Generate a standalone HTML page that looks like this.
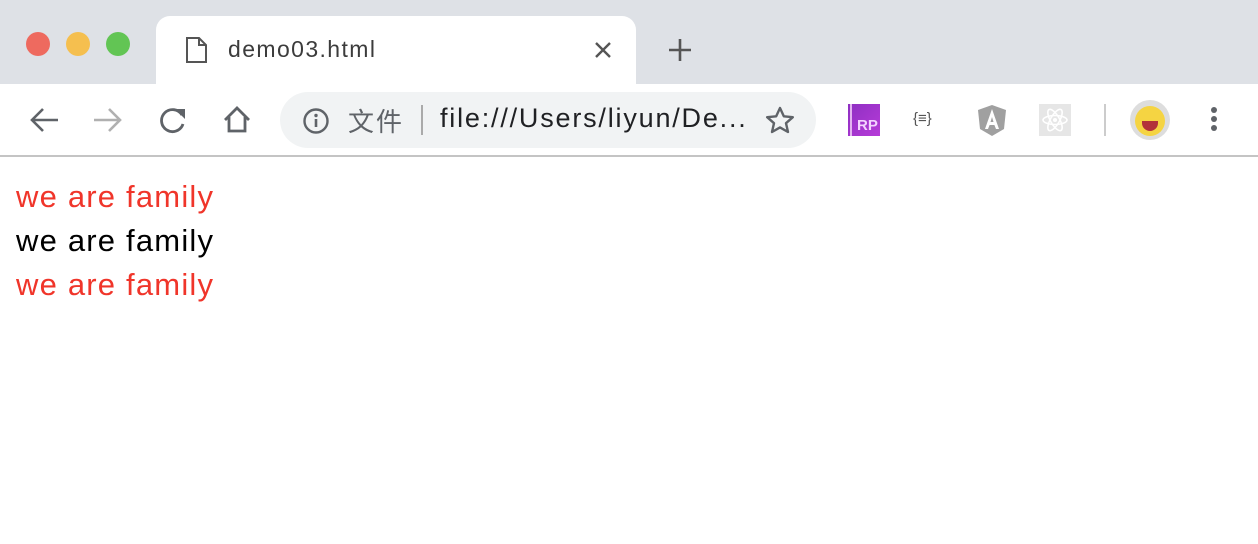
<!DOCTYPE html>
<html><head><meta charset="utf-8"><style>
*{margin:0;padding:0;box-sizing:border-box}
body{width:1258px;height:544px;overflow:hidden;background:#fff;font-family:"Liberation Sans","Noto Sans CJK SC",sans-serif;position:relative}
.top{position:absolute;left:0;top:0;width:1258px;height:84px;background:#dee1e6}
.dot{position:absolute;top:32px;width:24px;height:24px;border-radius:50%}
.tab{position:absolute;left:156px;top:16px;width:480px;height:68px;background:#fff;border-radius:14px 14px 0 0}
.bar{position:absolute;left:0;top:84px;width:1258px;height:73px;background:#fff;border-bottom:2px solid #c4c4c4}
.omni{position:absolute;left:280px;top:92px;width:536px;height:56px;background:#f1f3f4;border-radius:28px}
.t{position:absolute;white-space:nowrap}
.c{position:absolute;left:16px;font-size:31px;line-height:44px;letter-spacing:1.2px}
</style></head><body>
<div class="top"></div>
<div class="dot" style="left:26px;background:#ee6a5f"></div>
<div class="dot" style="left:66px;background:#f5bf4f"></div>
<div class="dot" style="left:106px;background:#62c554"></div>
<div class="tab"></div>
<svg style="position:absolute;left:185px;top:36px" width="24" height="28"><path d="M2 2h12l7 7v17H2z M14 2v7h7" fill="none" stroke="#555" stroke-width="2"/></svg>
<div class="t" style="left:228px;top:36px;font-size:23px;letter-spacing:1.4px;color:#3c3c3c">demo03.html</div>
<svg style="position:absolute;left:594px;top:41px" width="18" height="18"><path d="M2 2l14 14M16 2L2 16" stroke="#555" stroke-width="2.4"/></svg>
<svg style="position:absolute;left:667px;top:37px" width="26" height="26"><path d="M13 2v22M2 13h22" stroke="#555" stroke-width="2.6"/></svg>
<div class="bar"></div>
<svg style="position:absolute;left:28px;top:106px" width="32" height="28"><path d="M30 14H4M15 3L4 14l11 11" fill="none" stroke="#5f6368" stroke-width="2.6"/></svg>
<svg style="position:absolute;left:92px;top:106px" width="32" height="28"><path d="M2 14h26M17 3l11 11-11 11" fill="none" stroke="#b0b0b0" stroke-width="2.6"/></svg>
<svg style="position:absolute;left:158px;top:106px" width="30" height="28"><path d="M24 9A11 11 0 1 0 25 18" fill="none" stroke="#5f6368" stroke-width="2.8"/><path d="M17 3h10v10z" fill="#5f6368"/></svg>
<svg style="position:absolute;left:222px;top:105px" width="30" height="30"><path d="M3 15L15 3l12 12M7 12v14h16V12" fill="none" stroke="#5f6368" stroke-width="2.8"/></svg>
<div class="omni"></div>
<svg style="position:absolute;left:302px;top:107px" width="28" height="28"><circle cx="14" cy="14" r="11.5" fill="none" stroke="#5f6368" stroke-width="2.4"/><path d="M14 12v8" stroke="#5f6368" stroke-width="2.6"/><circle cx="14" cy="8.5" r="1.7" fill="#5f6368"/></svg>
<div class="t" style="left:348px;top:102px;font-size:26px;letter-spacing:2px;color:#5f6368">文件</div>
<div style="position:absolute;left:421px;top:105px;width:2px;height:30px;background:#aaa"></div>
<div class="t" style="left:440px;top:103px;font-size:27px;letter-spacing:1.8px;color:#202124">file:///Users/liyun/De...</div>
<svg style="position:absolute;left:764px;top:105px" width="32" height="30"><path d="M16 3l3.8 8.3 9 .9-6.8 6 2 8.8L16 22.4 8 27l2-8.8-6.8-6 9-.9z" fill="none" stroke="#5f6368" stroke-width="2.4" stroke-linejoin="round"/></svg>
<div style="position:absolute;left:848px;top:104px;width:32px;height:32px;background:linear-gradient(135deg,#8e2fc2,#b63bd8);"></div>
<div style="position:absolute;left:850px;top:104px;width:2px;height:32px;background:#e3b3f0"></div>
<div class="t" style="left:857px;top:117px;font-size:15px;font-weight:bold;color:#f3d4ff">RP</div>
<div class="t" style="left:913px;top:110px;font-size:15px;color:#555">{≡}</div>
<svg style="position:absolute;left:976px;top:103px" width="32" height="34"><path d="M16 2L30 7l-2 19-12 7-12-7L2 7z" fill="#a0a0a0"/><path d="M16 6l-7 20h3l1.6-4h4.8L20 26h3z M14.5 19L16 14l1.5 5z" fill="#fff"/></svg>
<div style="position:absolute;left:1039px;top:104px;width:32px;height:32px;background:#e6e6e6"></div>
<svg style="position:absolute;left:1039px;top:104px" width="32" height="32"><g fill="none" stroke="#fff" stroke-width="1.6"><ellipse cx="16" cy="16" rx="12" ry="4.5"/><ellipse cx="16" cy="16" rx="12" ry="4.5" transform="rotate(60 16 16)"/><ellipse cx="16" cy="16" rx="12" ry="4.5" transform="rotate(-60 16 16)"/></g><circle cx="16" cy="16" r="2" fill="#fff"/></svg>
<div style="position:absolute;left:1104px;top:104px;width:2px;height:32px;background:#ccc"></div>
<div style="position:absolute;left:1130px;top:100px;width:40px;height:40px;border-radius:50%;background:#ddd"></div>
<div style="position:absolute;left:1135px;top:106px;width:30px;height:30px;border-radius:50%;background:#f5d442"></div>
<div style="position:absolute;left:1142px;top:121px;width:16px;height:10px;border-radius:0 0 8px 8px;background:#b2323a"></div>
<div style="position:absolute;left:1211px;top:107px;width:6px;height:6px;border-radius:50%;background:#5f6368;box-shadow:0 9px 0 #5f6368,0 18px 0 #5f6368"></div>
<div class="c" style="top:175px;color:#f0352a">we are family</div>
<div class="c" style="top:219px;color:#000">we are family</div>
<div class="c" style="top:263px;color:#f0352a">we are family</div>
</body></html>
